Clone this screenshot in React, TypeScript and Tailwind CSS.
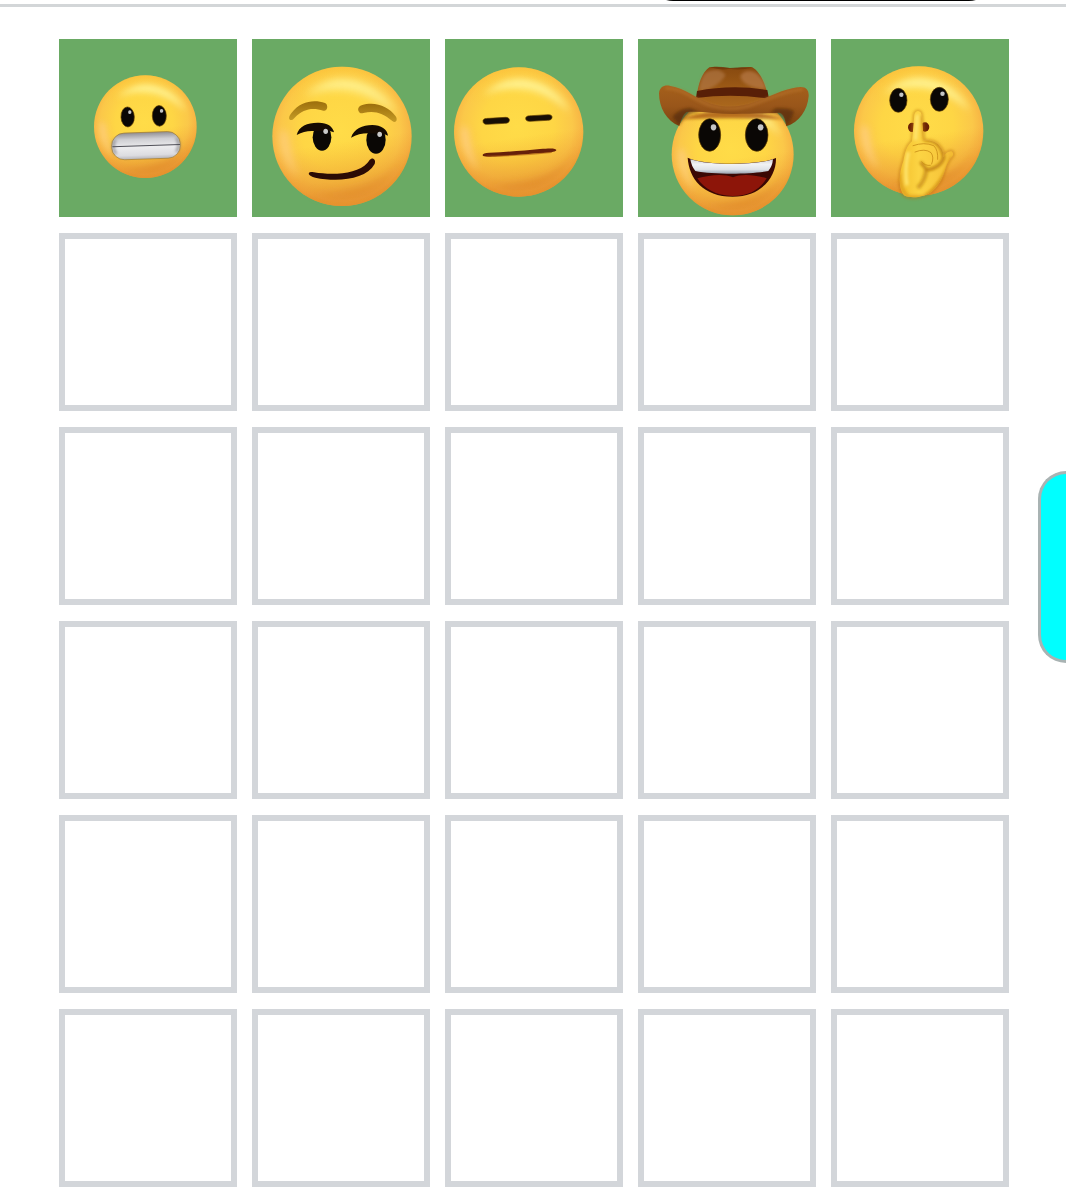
import React from "react";

const EMPTY_ROWS = 5;

const Defs = () => (
  <svg className="absolute size-0" aria-hidden="true">
    <defs>
      <radialGradient id="skin" cx="0.49" cy="0.46" r="0.56">
        <stop offset="0" stopColor="#ffdc48" />
        <stop offset="0.5" stopColor="#fed645" />
        <stop offset="0.76" stopColor="#fbc849" />
        <stop offset="0.9" stopColor="#f7b544" />
        <stop offset="1" stopColor="#ea942a" />
      </radialGradient>
      <linearGradient id="shade" x1="0" y1="0" x2="0.15" y2="1">
        <stop offset="0" stopColor="#ffc62e" stopOpacity="0.5" />
        <stop offset="0.3" stopColor="#ffd52e" stopOpacity="0" />
        <stop offset="0.6" stopColor="#ee9a2c" stopOpacity="0" />
        <stop offset="1" stopColor="#e28b2c" stopOpacity="0.7" />
      </linearGradient>
      <linearGradient id="teeth" x1="0" y1="0" x2="0" y2="1">
        <stop offset="0" stopColor="#8f8d92" />
        <stop offset="0.25" stopColor="#cfcfd3" />
        <stop offset="0.55" stopColor="#ececee" />
        <stop offset="0.85" stopColor="#dcdce0" />
        <stop offset="1" stopColor="#b5b3b8" />
      </linearGradient>
      <linearGradient id="smileTeeth" x1="0" y1="0" x2="0" y2="1">
        <stop offset="0" stopColor="#d3d3d6" />
        <stop offset="0.35" stopColor="#f1f2f4" />
        <stop offset="0.7" stopColor="#dfe3e8" />
        <stop offset="1" stopColor="#98a2ae" />
      </linearGradient>
      <linearGradient id="brow" x1="0" y1="0" x2="0" y2="1">
        <stop offset="0" stopColor="#9c6f0c" />
        <stop offset="1" stopColor="#c49a25" />
      </linearGradient>
      <linearGradient id="brim" x1="0" y1="0" x2="0" y2="1">
        <stop offset="0" stopColor="#a5601b" />
        <stop offset="0.5" stopColor="#99561a" />
        <stop offset="1" stopColor="#7a420f" />
      </linearGradient>
      <linearGradient id="crown" x1="0" y1="0" x2="0" y2="1">
        <stop offset="0" stopColor="#87490f" />
        <stop offset="0.5" stopColor="#9c5a16" />
        <stop offset="1" stopColor="#ad6a1f" />
      </linearGradient>
      <linearGradient id="hand" x1="0" y1="0" x2="1" y2="0">
        <stop offset="0" stopColor="#f3bf2c" />
        <stop offset="0.35" stopColor="#fcd443" />
        <stop offset="0.75" stopColor="#f8c83c" />
        <stop offset="1" stopColor="#f2b932" />
      </linearGradient>
      <filter id="soft" x="-50%" y="-50%" width="200%" height="200%">
        <feGaussianBlur stdDeviation="12" />
      </filter>
      <filter id="fine" x="-50%" y="-50%" width="200%" height="200%">
        <feGaussianBlur stdDeviation="4" />
      </filter>
      <clipPath id="handShape">
        <path d={HAND} />
      </clipPath>
    </defs>
  </svg>
);

const HAND =
  "M261 334 C264 305 266 279 268 254 Q271 243 279 243 Q289 244 290 257 L297 332 C320 330 338 337 346 352 C353 360 357 370 354 382 C362 369 371 362 380 364 Q387 369 383 378 C374 387 366 400 361 416 C354 442 342 465 322 483 C300 501 260 508 237 496 C219 473 222 428 235 393 C240 366 245 347 261 334Z";

const Head = ({ cx, cy, r }: { cx: number; cy: number; r: number }) => (
  <g transform={`translate(${cx} ${cy}) scale(${r / 200})`}>
    <circle r="200" fill="url(#skin)" />
    <circle r="200" fill="url(#shade)" />
    <path
      d="M-110 -115 Q-20 -200 85 -142 Q135 -112 158 -62 Q100 -112 40 -128 Q-40 -145 -110 -115Z"
      fill="#fff596"
      opacity="0.9"
      filter="url(#soft)"
    />
    <path
      d="M-176 -20 Q-184 55 -125 122 Q-150 65 -158 -10Z"
      fill="#ffcf8c"
      opacity="0.8"
      filter="url(#soft)"
    />
    <path
      d="M-90 165 Q100 210 180 55 Q120 160 -90 165Z"
      fill="#d97c20"
      opacity="0.5"
      filter="url(#soft)"
    />
  </g>
);

const Eye = ({ cx, cy, rx, ry }: { cx: number; cy: number; rx: number; ry: number }) => (
  <g>
    <ellipse cx={cx} cy={cy} rx={rx} ry={ry} fill="#0a0705" stroke="#5d3b00" strokeWidth="2" />
    <ellipse
      cx={cx + rx * 0.35}
      cy={cy - ry * 0.47}
      rx={rx * 0.25}
      ry={ry * 0.19}
      fill="#c4c4c4"
    />
  </g>
);

const Grimace = () => (
  <>
    <Head cx={286} cy={290} r={154} />
    <g transform="rotate(-2 286 290)">
      <Eye cx={234} cy={259} rx={20} ry={30} />
      <Eye cx={329} cy={259} rx={21} ry={31} />
    </g>
    <g transform="rotate(-2 288 347)">
      <rect x="185" y="307" width="206" height="80" rx="38" fill="url(#teeth)" stroke="#a47b27" strokeWidth="2" />
      <path d="M196 326 Q183 347 197 369M380 326 Q393 347 379 369" fill="none" stroke="#626066" strokeWidth="8" opacity="0.6" filter="url(#fine)" />
      <path d="M187 347H390" stroke="#505058" strokeWidth="3" />
    </g>
  </>
);

const Smirk = () => (
  <>
    <Head cx={291} cy={319} r={209} />
    <path
      d="M139 270 C130 270 130 260 140 248 C166 215 205 207 240 219 C251 224 248 245 235 242 C202 232 176 236 149 263 C145 268 142 270 139 270Z"
      fill="url(#brow)"
    />
    <path
      d="M344 248 C336 240 339 230 350 226 C390 213 430 229 452 259 C460 271 451 281 442 273 C413 248 387 241 355 249 C350 250 347 250 344 248Z"
      fill="url(#brow)"
    />
    <ellipse cx="231" cy="322" rx="28" ry="40" fill="#0a0705" />
    <path
      d="M155 315 C162 286 190 277 222 278 C246 278 264 289 267 307 C260 304 254 302 248 302 L206 303 C187 302 172 306 155 315Z"
      fill="#160b02"
    />
    <ellipse cx="393" cy="330" rx="29" ry="41" fill="#0a0705" />
    <path
      d="M318 323 C327 296 352 285 382 285 C408 285 427 298 429 317 C422 313 416 311 410 311 L370 310 C350 310 334 314 318 323Z"
      fill="#160b02"
    />
    <ellipse cx="242" cy="304" rx="7" ry="8" fill="#c9c9c9" />
    <ellipse cx="404" cy="313" rx="7" ry="8" fill="#c9c9c9" />
    <path
      d="M192 428 C189 434 197 439 211 443 C279 457 362 449 389 402 C393 392 387 384 379 386 C373 388 372 394 367 399 C338 431 267 437 207 427 C200 426 195 425 192 428Z"
      fill="#2b0b05"
    />
  </>
);

const Expressionless = () => (
  <>
    <Head cx={236} cy={306} r={194} />
    <g fill="#170e05" stroke="#5d3b00" strokeWidth="2">
      <path d="M129 273 C129 267 136 265 147 265 L197 262 C205 262 209 266 208 272 C207 278 202 279 194 280 L142 283 C133 283 129 280 129 273Z" />
      <path d="M257 265 C257 259 264 257 275 257 L325 254 C333 254 337 257 336 263 C335 269 330 270 322 271 L270 274 C261 274 257 271 257 265Z" />
    </g>
    <path
      d="M128 376 C127 371 134 369 148 368 C206 366 255 361 300 357 C333 354 349 355 349 360 C349 365 336 367 310 369 C262 372 212 376 173 379 C142 381 129 381 128 376Z"
      fill="#66200a"
    />
    <path d="M140 379 Q240 377 335 367" fill="none" stroke="#a85a12" strokeWidth="4" opacity="0.6" />
  </>
);

const Cowboy = () => (
  <>
    <Head cx={308} cy={373} r={183} />
    <path d="M152 268 Q300 212 462 268 Q300 262 152 268Z" fill="#a6530a" opacity="0.8" filter="url(#fine)" />
    <Eye cx={239} cy={315} rx={33} ry={49} />
    <Eye cx={380} cy={315} rx={34} ry={49} />
    <path
      d="M173 383 C224 407 386 407 438 384 C439 438 397 500 308 500 C219 500 177 445 173 383Z"
      fill="#3b0804"
    />
    <path
      d="M202 445 C240 434 282 430 309 442 C334 430 374 434 410 445 C392 474 361 498 308 498 C257 498 222 475 202 445Z"
      fill="#8d1509"
    />
    <path
      d="M181 388 C238 407 374 407 429 388 Q427 409 415 423 C360 434 250 434 196 423 Q184 408 181 388Z"
      fill="url(#smileTeeth)"
    />
    <path
      d="M200 203 C203 165 216 127 238 112 C256 107 276 113 299 114 C323 117 344 109 367 112 C391 126 407 162 416 207 L400 240 H215 Z"
      fill="url(#crown)"
    />
    <path d="M224 130 C248 113 279 119 286 136 C276 157 237 184 207 183 C209 162 214 144 224 130Z" fill="#b47c4c" opacity="0.6" filter="url(#fine)" />
    <path d="M331 137 C342 117 373 119 388 138 C401 151 407 166 407 177 C374 177 332 161 331 137Z" fill="#ba7d4b" opacity="0.65" filter="url(#fine)" />
    <path d="M240 112 Q272 122 299 116 Q329 122 367 113 Q333 110 300 114 Q264 108 240 112Z" fill="#6c340a" opacity="0.7" />
    <path d="M201 183 Q307 162 412 180 L417 206 Q308 190 198 204Z" fill="#581f07" />
    <path
      d="M87 190 C89 170 104 164 121 168 C166 175 197 206 243 221 C290 235 335 231 373 216 C420 200 468 173 512 171 C530 171 537 182 536 199 C533 240 507 278 469 289 C465 262 460 252 449 248 C400 252 360 250 311 252 C260 252 210 242 170 246 C160 252 154 268 148 288 C109 273 87 232 87 190Z"
      fill="url(#brim)"
    />
    <path
      d="M106 174 C160 174 192 212 243 227 C290 241 335 237 373 222 C420 206 466 181 518 178"
      fill="none"
      stroke="#b8732c"
      strokeWidth="8"
      opacity="0.7"
      filter="url(#fine)"
    />
    <path d="M128 262 Q140 238 180 234 L210 246 Q168 246 148 286Z" fill="#4d2507" opacity="0.6" filter="url(#fine)" />
    <path d="M492 244 Q478 232 437 235 L420 248 Q460 248 470 286 Q486 270 492 244Z" fill="#4d2507" opacity="0.6" filter="url(#fine)" />
  </>
);

const Shush = () => (
  <>
    <Head cx={281} cy={303} r={194} />
    <Eye cx={220} cy={211} rx={26} ry={36} />
    <Eye cx={343} cy={208} rx={27} ry={36} />
    <ellipse cx="261" cy="292" rx="12" ry="14" fill="#6b2106" />
    <ellipse cx="300" cy="291" rx="13" ry="14" fill="#6b2106" />
    <path d={HAND} fill="none" stroke="#b9700c" strokeWidth="8" opacity="0.6" filter="url(#fine)" />
    <path d={HAND} fill="url(#hand)" />
    <g clipPath="url(#handShape)" fill="none" filter="url(#fine)">
      <path d="M298 330 Q350 330 356 384 Q346 414 306 420 Q294 404 286 396" stroke="#b9780c" strokeWidth="8" />
      <path d="M304 418 Q302 450 278 474" stroke="#bf8010" strokeWidth="12" opacity="0.7" />
      <path d="M384 384 Q352 470 300 502" stroke="#d08a14" strokeWidth="16" opacity="0.8" />
      <path d="M222 430 Q224 480 250 502 H310" stroke="#dd9c1a" strokeWidth="12" opacity="0.8" />
      <path d="M277 254 L271 330 M250 366 Q238 420 246 466" stroke="#ffe670" strokeWidth="10" />
      <path d="M292 256 L298 332" stroke="#cf8f14" strokeWidth="8" />
    </g>
    <path
      d="M264 347 Q298 335 326 347 Q340 360 338 388 M270 366 Q300 354 318 368 Q328 382 320 402 M290 396 Q300 408 316 406"
      fill="none"
      stroke="#c48713"
      strokeWidth="3"
      strokeLinecap="round"
      opacity="0.75"
    />
  </>
);

const guess = [
  { label: "Grimacing face", viewBox: "27 27 534 534", Face: Grimace },
  { label: "Smirking face", viewBox: "21 27 534 534", Face: Smirk },
  { label: "Expressionless face", viewBox: "15 27 534 534", Face: Expressionless },
  { label: "Cowboy face", viewBox: "24 27 534 534", Face: Cowboy },
  { label: "Shushing face", viewBox: "18 27 534 534", Face: Shush },
];

const App = () => {
  return (
    <div className="relative min-h-screen overflow-hidden bg-white">
      <Defs />

      <header className="flex h-[7px] items-end justify-end overflow-hidden border-b-3 border-[#d3d6d8] pr-[73px]">
        <button
          type="button"
          aria-label="Menu"
          className="mb-[3px] h-16 w-[344px] shrink-0 rounded-3xl bg-black"
        />
      </header>

      <main className="grid grid-cols-5 gap-x-[15px] gap-y-4 pt-8 pr-[57px] pb-[13px] pl-[59px]">
        {guess.map(({ label, viewBox, Face }) => (
          <div key={label} className="aspect-square bg-[#6aaa64]">
            <svg viewBox={viewBox} role="img" aria-label={label} className="size-full">
              <Face />
            </svg>
          </div>
        ))}

        {/* Remaining guesses */}
        {Array.from({ length: EMPTY_ROWS * guess.length }, (_, i) => (
          <div key={i} className="aspect-square border-6 border-[#d3d6da]" />
        ))}
      </main>

      <button
        type="button"
        aria-label="Open panel"
        className="absolute top-[471px] right-0 h-[192px] w-7 rounded-l-[28px] border-3 border-r-0 border-[#a9b3b3] bg-[#0ff]"
      />
    </div>
  );
};

export default App;
